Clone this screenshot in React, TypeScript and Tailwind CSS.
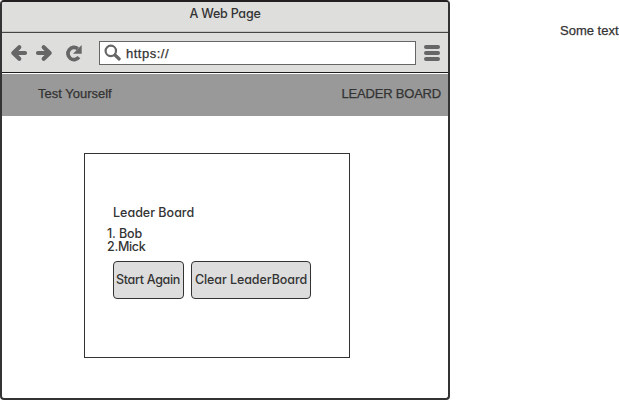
const round = "font-['Inter','Liberation_Sans',sans-serif] [font-feature-settings:'cv11'] font-medium text-[12.5px] leading-[13px] whitespace-nowrap";
const plain = "font-['Liberation_Sans',Arial,sans-serif] text-[13px] leading-[13px] whitespace-nowrap [-webkit-text-stroke:0.25px_#333]";

function Toolbar() {
  return (
    <div className="flex h-[40px] items-start border-b border-[#1c1a1a] bg-[#dededc] pt-2">
      <svg className="ml-[7px] h-6 w-[80px] shrink-0" viewBox="0 0 80 24" fill="none" stroke="#666" strokeWidth="4.200" strokeLinecap="round" strokeLinejoin="round">
        <path d="M10.300 6.300 4.300 12l6 5.700M5 12h11" />
        <path d="M34.700 6.300l6 5.700-6 5.700M29 12h11" />
        <path d="M69.900 16.200A6.100 6.100 0 1 1 68.800 7.700" strokeWidth="3.700" strokeLinecap="butt" />
        <path d="M72.700 4v8.800H64z" fill="#666" stroke="none" />
      </svg>
      <div className="ml-[10px] flex h-6 w-[317px] shrink-0 items-center border border-[#666] bg-white">
        <svg className="ml-1 h-[18px] w-[18px]" viewBox="0 0 18 18" fill="none" stroke="#666">
          <circle cx="6.800" cy="6.900" r="5.200" strokeWidth="2.200" />
          <path d="m11 11 4.200 4" strokeWidth="3.200" strokeLinecap="round" />
        </svg>
        <span className={`${plain} ml-1 tracking-[0.500px]`}>https://</span>
      </div>
      <div className="mt-1 ml-2 flex flex-col gap-0.5">
        <span className="h-1 w-4 rounded-full bg-[#666]" />
        <span className="h-1 w-4 rounded-full bg-[#666]" />
        <span className="h-1 w-4 rounded-full bg-[#666]" />
      </div>
    </div>
  );
}

function LeaderCard() {
  return (
    <section className="mt-[37px] ml-[82px] h-[205px] w-[266px] border border-[#333] pt-[52px]">
      <h1 className={`${round} ml-[28px]`}>Leader Board</h1>
      <ol className={`${round} mt-2 ml-[22px]`}>
        <li className="tracking-[-0.100px]">1. Bob</li>
        <li className="tracking-[-0.300px]">2.Mick</li>
      </ol>
      <div className="mt-2 ml-[28px] flex gap-[7px]">
        <button className={`${round} h-[38px] w-[71px] rounded-[4px] border border-[#333] bg-[#ddd] pr-px pb-0.5 tracking-[-0.300px]`}>
          Start Again
        </button>
        <button className={`${round} h-[38px] w-[120px] rounded-[4px] border border-[#333] bg-[#ddd] pb-0.5 tracking-[-0.080px]`}>
          Clear LeaderBoard
        </button>
      </div>
    </section>
  );
}

export default function App() {
  return (
    <div className="flex h-[400px] w-[619px] overflow-hidden bg-white text-[#333]">
      <main className="h-[400px] w-[450px] shrink-0 overflow-hidden rounded-[4px] border-2 border-[#333] border-t-[#231f20]">
        <div className="flex h-[31px] justify-center border-b border-[#444] bg-[#dededc] pt-[5px] shadow-[inset_0_-1px_#c4c4c2]">
          <span className={`${round} tracking-[-0.220px]`}>A Web Page</span>
        </div>
        <Toolbar />
        <nav className="mt-px flex h-[42px] justify-between bg-[#999] pt-[13px] pr-[7px] pl-[36px]">
          <span className={plain}>Test Yourself</span>
          <span className={`${plain} tracking-[-0.200px]`}>LEADER BOARD</span>
        </nav>
        <LeaderCard />
      </main>
      <span className={`${plain} mt-6 ml-[110px]`}>Some text</span>
    </div>
  );
}
